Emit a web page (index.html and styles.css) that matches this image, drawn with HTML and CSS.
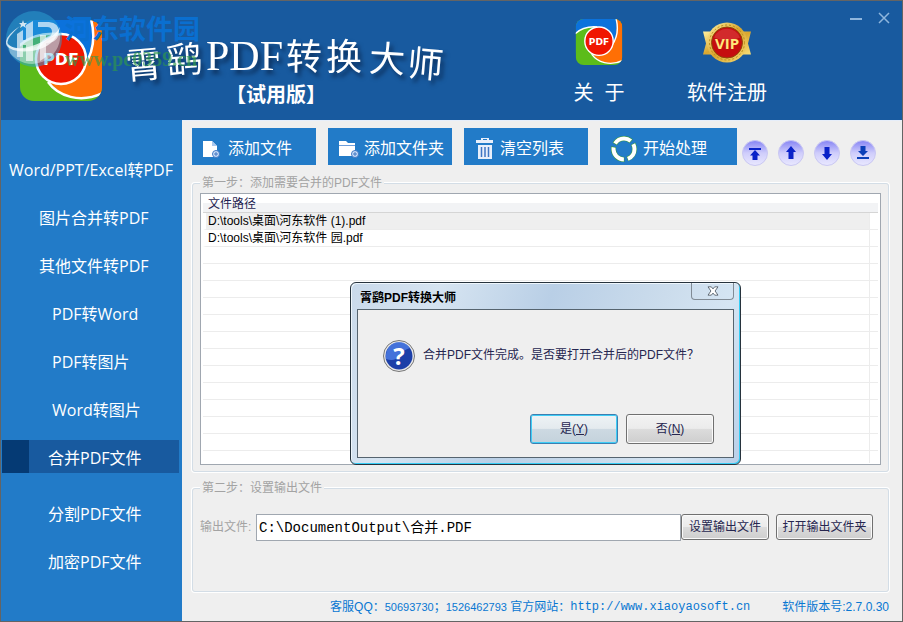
FILE: index.html
```html
<!DOCTYPE html>
<html lang="zh-CN">

<head>
	<meta charset="UTF-8">
	<title>霄鹞PDF转换大师</title>
	<link rel="stylesheet" href="styles.css">
</head>

<body>

<svg class="defs" aria-hidden="true">
	<clipPath id="logoClip"><rect width="82" height="81" rx="14"/></clipPath>
	<symbol id="pdfLogo" viewBox="0 0 82 81">
		<g clip-path="url(#logoClip)">
			<rect width="82" height="81" fill="#5cbc1a"/>
			<path fill="#0b72dc" d="M0 0H72Q77 26 64 50L16 42Q12 10 0 26Z"/>
			<path fill="#5cbc1a" d="M0 25Q16 12 38 14L20 50L0 60Z"/>
			<path fill="#ff6f05" d="M71 0H82V74C58 84 38 74 28 60L62 52Q76 26 71 0Z"/>
			<path fill="none" stroke="#fff" stroke-width="2.5" d="M71 -1Q78 26 64 46M-1 26Q14 12 38 14M28 62C38 76 60 84 83 73"/>
			<circle cx="41" cy="39" r="25" fill="#f01600" stroke="#fff" stroke-width="2.5"/>
		</g>
	</symbol>
	<linearGradient id="ball" x1="0" y1="0" x2="0" y2="1">
		<stop offset="0" stop-color="#8583f4"/>
		<stop offset=".5" stop-color="#cfcdfb"/>
		<stop offset="1" stop-color="#e9e8ff"/>
	</linearGradient>
	<linearGradient id="gold" x1="0" y1="0" x2="1" y2="1">
		<stop offset="0" stop-color="#fff0a0"/>
		<stop offset=".5" stop-color="#d9a62e"/>
		<stop offset="1" stop-color="#f7de78"/>
	</linearGradient>
</svg>

<div class="window">

<header class="banner">
	<svg class="logo" viewBox="0 0 82 81">
		<use href="#pdfLogo" width="82" height="81"/>
		<text class="logoText" x="41" y="45">PDF</text>
	</svg>
	<div class="brand">
		<svg class="title" viewBox="0 0 330 48" role="img" aria-label="霄鹞PDF转换大师">
			<g class="titleText">
				<text x="0" y="43" transform="rotate(-5 18 34)">霄</text>
				<text x="40" y="38" transform="rotate(-4 56 26)">鹞</text>
				<text class="latin" x="80" y="35">PDF</text>
				<text x="160" y="35">转</text>
				<text x="200" y="35">换</text>
				<text x="243" y="37" transform="rotate(3 260 27)">大</text>
				<text x="281" y="42" transform="rotate(5 298 32)">师</text>
			</g>
		</svg>
		<div class="edition">【试用版】</div>
	</div>

	<nav class="topNav">
		<button type="button" class="topBtn">
			<svg viewBox="0 0 82 81">
				<use href="#pdfLogo" width="82" height="81"/>
				<text class="logoText" x="41" y="45">PDF</text>
			</svg>
			<span>关&nbsp; 于</span>
		</button>
		<button type="button" class="topBtn">
			<svg viewBox="0 0 48 45">
				<path fill="url(#gold)" d="M0 12H48L45 24L48 35H0L3 24Z"/>
				<circle cx="24" cy="23" r="20" fill="url(#gold)"/>
				<circle cx="24" cy="23" r="17.5" fill="none" stroke="#b98a1c" stroke-dasharray="2 2"/>
				<circle cx="24" cy="23" r="15.5" fill="#c50d0f" stroke="#8f4a08"/>
				<path fill="#e0484a" opacity=".5" d="M11 18A14 14 0 0 1 37 18Q24 24 11 18Z"/>
				<text x="24" y="29" text-anchor="middle" font-family="Open Sans, sans-serif" font-weight="bold" font-size="15" fill="#ffe77c">VIP</text>
			</svg>
			<span>软件注册</span>
		</button>
	</nav>

	<div class="winBtns">
		<button type="button" aria-label="最小化"><svg viewBox="0 0 12 12"><path d="M0 7H12" stroke-width="2"/></svg></button>
		<button type="button" aria-label="关闭"><svg viewBox="0 0 12 12"><path d="M1 1L11 11M11 1L1 11" stroke-width="1.5"/></svg></button>
	</div>

	<!-- filigrane -->
	<div class="watermark">
		<svg viewBox="0 0 56 56">
			<circle cx="28" cy="28" r="28" fill="#2ba3d6" opacity=".5"/>
			<path d="M2 34Q22 46 54 22A28 28 0 0 1 4 42Z" fill="#fff" opacity=".4"/>
			<path d="M14 15Q-3 30 3 34Q14 42 38 30Q50 24 54 16Q50 36 26 40Q6 42 1 35Q-4 27 14 15Z" fill="#fff" opacity=".75"/>
			<path d="M11 23L17 19V46H11ZM20 14L27 10V50H20ZM17 29H20V34H17ZM32 11H43Q53 12 53 21Q52 32 40 32V46L34 50V24H40V27Q46 26 46 21Q46 16 41 16H32Z" fill="#fff" opacity=".65"/>
			<path d="M17 9l1 3h3l-2 2 1 3-3-2-3 2 1-3-2-2h3z" fill="#fff" opacity=".8"/>
		</svg>
		<div>
			<div class="wmName">河东软件园</div>
			<div class="wmUrl">www.pc0359.cn</div>
		</div>
	</div>
</header>

<div class="body">

<nav class="sidebar">
	<ul>
		<li class="wide"><a href="#">Word/PPT/Excel转PDF</a></li>
		<li class="toPdf"><a href="#">图片合并转PDF</a></li>
		<li class="toPdf"><a href="#">其他文件转PDF</a></li>
		<li class="convert"><a href="#">PDF转Word</a></li>
		<li class="convert"><a href="#">PDF转图片</a></li>
		<li class="convert"><a href="#">Word转图片</a></li>
		<li class="tool active"><a href="#">合并PDF文件</a></li>
	</ul>
	<ul>
		<li class="tool"><a href="#">分割PDF文件</a></li>
		<li class="tool"><a href="#">加密PDF文件</a></li>
	</ul>
</nav>

<main class="main">
	<div class="toolbar">
		<button type="button" class="toolBtn">
			<svg viewBox="0 0 24 24"><path fill="#fff" d="M3 4H12L17 9V20H3Z"/><path fill="#a9c8ee" d="M12 4V9H17Z"/><circle cx="16" cy="17" r="3.5" fill="#cfe0f8" stroke="#3f76c4"/><path stroke="#3f76c4" d="M14 17H18M16 15V19"/></svg>
			添加文件
		</button>
		<button type="button" class="toolBtn">
			<svg viewBox="0 0 24 24"><path fill="#fff" d="M3 4H10L12 6H19V19H3Z"/><path stroke="#6d9edc" d="M3 8.5H19"/><circle cx="19" cy="17" r="3.5" fill="#cfe0f8" stroke="#3f76c4"/><path stroke="#3f76c4" d="M17 17H21M19 15V19"/></svg>
			添加文件夹
		</button>
		<button type="button" class="toolBtn clear">
			<svg viewBox="0 0 24 24"><path fill="#e8effb" d="M0 3H5V1H13V3H17V6H0ZM2 8H16V22H2Z"/><path fill="#227bc8" d="M7 2H11V3H7Z"/><path stroke="#3f76c4" stroke-width="1.5" d="M5.500 10V20M9 10V20M12.500 10V20"/></svg>
			清空列表
		</button>
		<button type="button" class="toolBtn start">
			<svg viewBox="0 0 26 26"><circle cx="13" cy="13" r="10.5" fill="none" stroke="#3d9a3a" stroke-width="5" stroke-dasharray="19 3" stroke-dashoffset="6"/><circle cx="13" cy="13" r="10.5" fill="none" stroke="#fff" stroke-width="4" stroke-dasharray="18 4" stroke-dashoffset="5.5"/></svg>
			开始处理
		</button>
		<div class="moveBtns">
			<button type="button" aria-label="置顶"><svg viewBox="0 0 26 26"><circle cx="13" cy="13" r="12.5" fill="url(#ball)" stroke="#c9c7f2"/><path fill="#0a22c8" d="M7 8H19V10H7ZM13 10L18 15.500H15.500V20H10.500V15.500H8Z"/></svg></button>
			<button type="button" aria-label="上移"><svg viewBox="0 0 26 26"><circle cx="13" cy="13" r="12.5" fill="url(#ball)" stroke="#c9c7f2"/><path fill="#0a22c8" d="M13 6L18 12H15.500V19H10.500V12H8Z"/></svg></button>
			<button type="button" aria-label="下移"><svg viewBox="0 0 26 26"><circle cx="13" cy="13" r="12.5" fill="url(#ball)" stroke="#c9c7f2"/><path fill="#0a22c8" d="M13 20L18 14H15.500V7H10.500V14H8Z"/></svg></button>
			<button type="button" aria-label="置底"><svg viewBox="0 0 26 26"><circle cx="13" cy="13" r="12.5" fill="url(#ball)" stroke="#c9c7f2"/><path fill="#0b3fb8" d="M13 16L18 11H15.500V6H10.500V11H8ZM7 17H19V19H7Z"/></svg></button>
		</div>
	</div>

	<fieldset class="group files">
		<legend>第一步：添加需要合并的PDF文件</legend>
		<div class="fileBox">
			<table class="fileTable">
				<thead>
					<tr><th>文件路径</th><th class="edge"></th></tr>
				</thead>
				<tbody>
					<tr class="selected"><td>D:\tools\桌面\河东软件 (1).pdf</td><td class="edge"></td></tr>
					<tr><td>D:\tools\桌面\河东软件 园.pdf</td><td class="edge"></td></tr>
				</tbody>
			</table>
			<div class="emptyRows"></div>
		</div>
	</fieldset>

	<fieldset class="group output">
		<legend>第二步：设置输出文件</legend>
		<div class="outputRow">
			<label for="txtOutput">输出文件:</label>
			<input id="txtOutput" type="text" value="C:\DocumentOutput\合并.PDF">
			<button type="button" class="btn">设置输出文件</button>
			<button type="button" class="btn openDir">打开输出文件夹</button>
		</div>
	</fieldset>

	<footer class="footer">
		<span>客服QQ：<span class="num">50693730</span>；<span class="num">1526462793</span> 官方网站：</span>
		<a href="#">http://www.xiaoyaosoft.cn</a>
		<span class="version">软件版本号:2.7.0.30</span>
	</footer>
</main>

</div>

<div class="dialog" role="dialog" aria-labelledby="dlgTitle">
	<div class="dlgBar">
		<span id="dlgTitle">霄鹞PDF转换大师</span>
		<button type="button" class="dlgClose" aria-label="关闭">
			<svg viewBox="0 0 14 12"><path d="M1 1H5L7 3.500L9 1H13L9.500 6L13 11H9L7 8.500L5 11H1L4.500 6Z"/></svg>
		</button>
	</div>
	<div class="dlgBody">
		<div class="dlgMsg">
			<svg viewBox="0 0 32 32">
				<circle cx="16" cy="16" r="15.500" fill="#e8e8e8" stroke="#777"/>
				<circle cx="16" cy="16" r="13.500" fill="#1c3fa8"/>
				<path fill="#4f7fe6" d="M3 15A13 13 0 0 1 27 8Q20 10 16 16T3 19Z" opacity=".8"/>
				<text x="16" y="25" text-anchor="middle" font-family="Open Sans, sans-serif" font-weight="bold" font-size="24" fill="#fff">?</text>
			</svg>
			<span>合并PDF文件完成。是否要打开合并后的PDF文件？</span>
		</div>
		<div class="dlgBtns">
			<button type="button" class="btn default">是(<u>Y</u>)</button>
			<button type="button" class="btn">否(<u>N</u>)</button>
		</div>
	</div>
</div>

</div>

</body>
</html>
```
FILE: styles.css
```css
	* {
		box-sizing:border-box;
	}
	body {
		margin:0;
		font-family:"Liberation Sans", "Noto Sans CJK SC", sans-serif;
		font-size:12px;
		line-height:16px;
	}
	button {
		font:inherit;
		color:inherit;
		padding:0;
		border:none;
		background:none;
		cursor:pointer;
	}
	a {
		color:inherit;
		text-decoration:none;
	}
	.defs {
		position:absolute;
		width:0;
		height:0;
	}
	.window {
		position:relative;
		display:flex;
		flex-direction:column;
		min-height:100vh;
		border:1px solid #646464;
		background:#efefef;
	}

	/* banniere */
	.banner {
		position:relative;
		display:flex;
		height:119px;
		padding-left:19px;
		background:#185a9f;
		color:white;
	}
	.logo {
		width:82px;
		height:81px;
		margin-top:19px;
	}
	.logoText {
		font-family:"DejaVu Sans", sans-serif;
		font-size:16px;
		font-weight:bold;
		text-anchor:middle;
		fill:white;
	}
	.brand {
		width:330px;
		margin-left:24px;
		padding-top:34px;
	}
	.title {
		display:block;
		width:330px;
		height:48px;
		overflow:visible;
	}
	.titleText {
		font-family:"Noto Sans CJK SC", sans-serif;
		font-size:36px;
		fill:white;
		filter:drop-shadow(3px 4px 2px #0b2f5c);
	}
	.titleText .latin {
		font-family:"Liberation Serif", serif;
		font-size:42px;
	}
	.edition {
		padding-left:100px;
		font-size:20px;
		font-weight:bold;
		line-height:24px;
	}
	.topNav {
		display:flex;
		gap:48px;
		margin-left:auto;
		margin-right:135px;
		padding-top:18px;
	}
	.topBtn {
		display:flex;
		flex-direction:column;
		align-items:center;
		gap:16px;
		min-width:80px;
		height:88px;
		font-size:20px;
		line-height:24px;
	}
	.topBtn svg {
		width:48px;
		height:46px;
	}
	.winBtns {
		position:absolute;
		top:11px;
		right:12px;
		display:flex;
		gap:16px;
	}
	.winBtns svg {
		display:block;
		width:12px;
		height:12px;
		fill:none;
		stroke:#8fb6dd;
	}

	.watermark {
		position:absolute;
		left:5px;
		top:10px;
		display:flex;
		gap:3px;
		pointer-events:none;
	}
	.watermark svg {
		width:56px;
		height:56px;
	}
	.wmName {
		color:#0a6fd0;
		font-size:27px;
		font-weight:bold;
		line-height:38px;
	}
	.wmUrl {
		color:#2f9a4a;
		opacity:.65;
		font-family:"Liberation Serif", serif;
		font-size:20px;
		font-weight:bold;
		line-height:20px;
	}

	.body {
		display:flex;
		flex:1;
	}

	/* menu de gauche */
	.sidebar {
		width:181px;
		padding:32px 3px 0 1px;
		background:#227bc8;
		color:white;
	}
	.sidebar ul {
		display:flex;
		flex-direction:column;
		gap:15px;
		margin:0 0 23px;
		padding:0;
		list-style:none;
	}
	.sidebar li {
		height:33px;
		font-family:"Open Sans", "Noto Sans CJK SC", sans-serif;
		font-size:16px;
		line-height:37px;
		white-space:nowrap;
	}
	.sidebar a {
		display:block;
	}
	.wide {
		padding-left:7px;
	}
	.toPdf {
		padding-left:37px;
	}
	.convert {
		padding-left:50px;
	}
	.tool {
		padding-left:46px;
	}
	.active {
		background:linear-gradient(to right, #053a74 27px, #185a9f 27px);
	}

	.main {
		flex:1;
		display:flex;
		flex-direction:column;
		min-width:0;
		padding:7px 13px 0 10px;
		border-top:1px solid #e6eefa;
	}
	.toolbar {
		display:flex;
		gap:12px;
		margin-bottom:9px;
	}
	.toolBtn {
		display:flex;
		align-items:center;
		gap:4px;
		width:124px;
		height:37px;
		padding:4px 0 0 8px;
		background:#227bc8;
		color:white;
		font-size:16px;
		line-height:24px;
		white-space:nowrap;
	}
	.toolBtn svg {
		width:24px;
		height:24px;
		fill:none;
	}
	.clear {
		padding-left:12px;
		gap:0;
	}
	.start {
		width:137px;
		padding-left:11px;
		gap:6px;
	}
	.start svg {
		width:26px;
		height:26px;
	}
	.moveBtns {
		display:flex;
		gap:10px;
		margin-left:-7px;
		padding-top:12px;
	}
	.moveBtns svg {
		display:block;
		width:26px;
		height:26px;
	}

	.group {
		display:flex;
		min-width:0;
		margin:0;
		padding:2px 7px 6px;
		border:1px solid #d3dde6;
		border-radius:3px;
		box-shadow:0 0 0 1px white;
	}
	.group legend {
		padding:0 2px;
		background:#efefef;
		color:#a3a3a3;
	}
	.files {
		flex:1;
		margin-bottom:8px;
	}
	.fileBox {
		flex:1;
		display:flex;
		flex-direction:column;
		min-width:0;
		padding:1px 2px;
		border:1px solid #a0a7b0;
		background:white;
	}
	.fileTable {
		width:100%;
		border-collapse:separate;
		border-spacing:0;
	}
	.fileTable th {
		height:18px;
		padding:0 5px;
		border-bottom:1px solid #d5d5d5;
		background:linear-gradient(white 45%, #f2f3f5 45%);
		color:#1e1e50;
		font-weight:normal;
		text-align:left;
	}
	.fileTable td {
		height:17px;
		padding:0 2px;
		border-left:3px solid transparent;
		border-right:1px solid #ececec;
		border-bottom:1px solid #ececec;
		background-clip:padding-box;
	}
	.fileTable .edge {
		width:8px;
		padding:0;
		border-left:none;
		border-right:none;
	}
	.selected td:first-child {
		background-color:#efefef;
	}
	/* lignes vides sous la liste */
	.emptyRows {
		flex:1;
		background:
			linear-gradient(#ececec, #ececec) right 8px top / 1px 100% no-repeat,
			repeating-linear-gradient(white 0, white 16px, #ececec 16px, #ececec 17px);
	}

	.output {
		padding:18px 15px 50px 7px;
	}
	.outputRow {
		flex:1;
		display:flex;
		min-width:0;
	}
	.outputRow label {
		width:56px;
		line-height:27px;
		color:#a3a3a3;
	}
	.outputRow input {
		flex:1;
		min-width:0;
		height:27px;
		padding:0 2px 4px;
		border:1px solid #a0a7b0;
		background:white;
		color:black;
		font-family:"Liberation Mono", "Noto Sans CJK SC", monospace;
		font-size:14px;
	}
	.btn {
		width:88px;
		height:26px;
		border:1px solid #707070;
		border-radius:3px;
		background:linear-gradient(#f3f3f3, #ebebeb 48%, #dcdcdc 50%, #cecece);
		box-shadow:inset 0 0 0 1px #fafafa;
		color:#26264f;
	}
	.openDir {
		width:97px;
		margin-left:7px;
	}

	.footer {
		display:flex;
		justify-content:flex-end;
		height:29px;
		padding-top:7px;
		color:#0877d2;
		white-space:nowrap;
	}
	.footer .num {
		font-size:11px;
	}
	.footer a {
		font-family:"Liberation Mono", monospace;
	}
	.version {
		margin-left:32px;
	}

	/* boite de dialogue */
	.dialog {
		position:absolute;
		left:349px;
		top:281px;
		width:391px;
		padding:0 6px 6px;
		border:1px solid #27333d;
		border-radius:6px;
		background:linear-gradient(110deg, #c9d9ea, #d6e4f1 20%, #b9cfe6 45%, #cbdcec 70%, #d5e5f3 85%, #b9cfe8);
		box-shadow:inset -1px -1px 0 #35cdf5, inset 1px 1px 0 #eef6fc;
	}
	.dlgBar {
		display:flex;
		justify-content:space-between;
		height:26px;
		padding-left:3px;
		font-weight:bold;
		line-height:30px;
	}
	.dlgClose {
		display:flex;
		align-items:center;
		justify-content:center;
		width:43px;
		height:17px;
		border:1px solid #818b95;
		border-top:none;
		border-radius:0 0 4px 4px;
	}
	.dlgClose svg {
		width:12px;
		height:10px;
		fill:white;
		stroke:#4a5560;
	}
	.dlgBody {
		height:149px;
		padding:30px 19px 13px 25px;
		border:1px solid #56646f;
		background:#efefef;
		color:#26264f;
	}
	.dlgMsg {
		display:flex;
		gap:8px;
		line-height:30px;
		white-space:nowrap;
	}
	.dlgMsg svg {
		width:32px;
		height:32px;
	}
	.dlgBtns {
		display:flex;
		justify-content:flex-end;
		gap:8px;
		margin-top:42px;
	}
	.dlgBtns .btn {
		height:30px;
	}
	.dlgBtns .default {
		border-color:#3c7fb1;
		background:linear-gradient(#eef3f5, #e4eaee 48%, #cdd9e2 50%, #c4d2dc);
		box-shadow:inset 0 0 0 1px #3fcdf6;
	}
```
